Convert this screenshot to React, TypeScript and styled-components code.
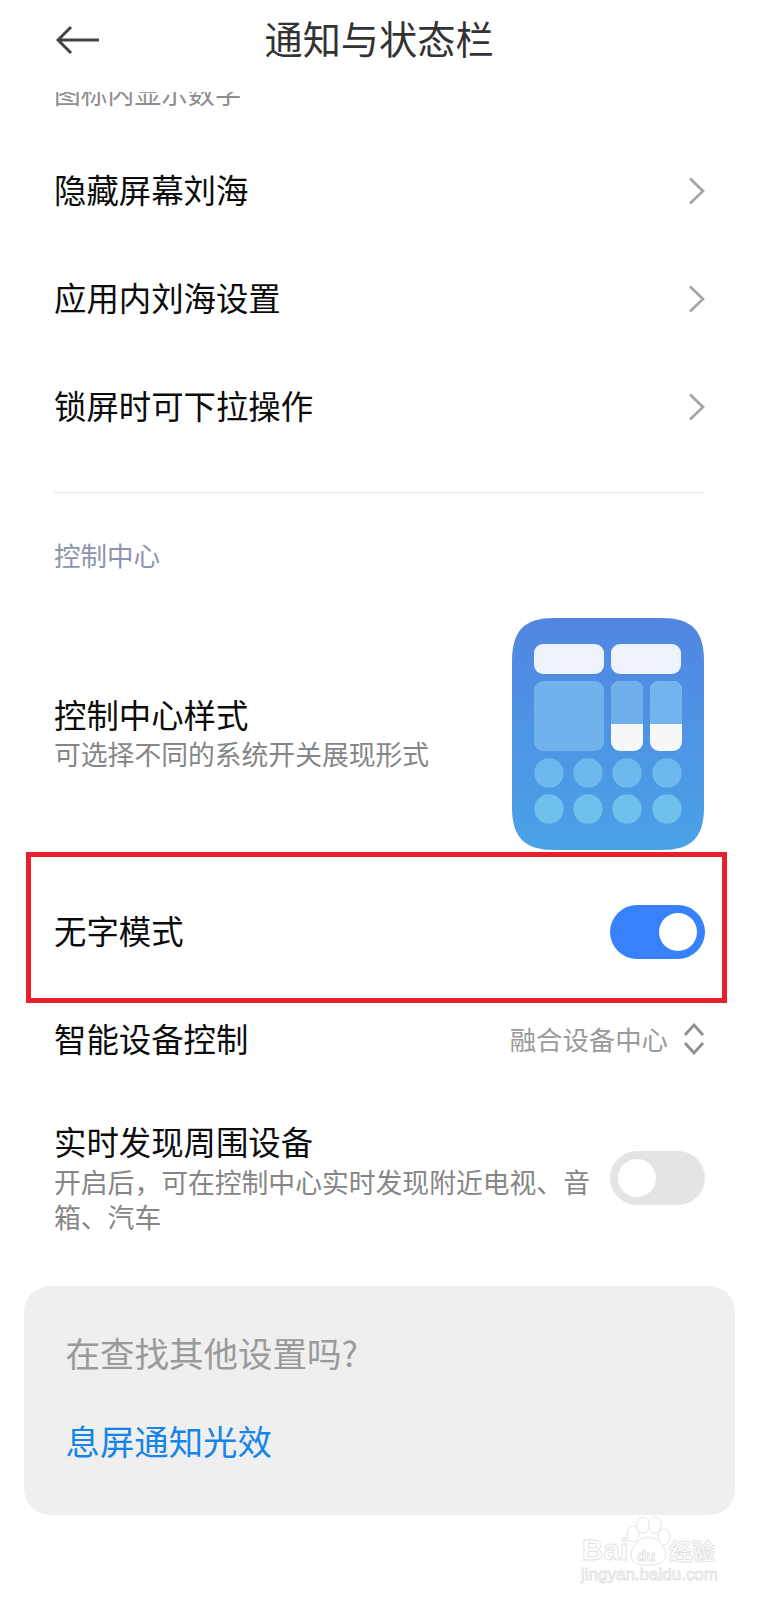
import React from "react";
import styled, { createGlobalStyle } from "styled-components";

const Global = createGlobalStyle`
  html, body { margin: 0; padding: 0; background: #fff; }
  body { font-family: "Noto Sans CJK SC", "Noto Sans", sans-serif; }
`;

const Page = styled.div`
  position: relative;
  width: 758px;
  height: 1600px;
  background: #fff;
  overflow: hidden;
  display: flex;
  flex-direction: column;
`;

const Header = styled.header`
  height: 92px;
  flex: none;
  padding-left: 56px;
  display: grid;
  grid-template-columns: 1fr auto 1fr;
  align-items: start;
  background: #fff;
  position: relative;
  z-index: 1;
`;

const BackIcon = styled.svg`
  width: 44px;
  height: 30px;
  margin-top: 25px;
  fill: none;
  stroke: #444;
  stroke-width: 3;
`;

const Title = styled.h1`
  margin: 10px 0 0 -56px;
  font-size: 38.2px;
  line-height: 56px;
  font-weight: 400;
  color: #333;
  white-space: nowrap;
`;

const Content = styled.main`
  flex: none;
  display: flex;
  flex-direction: column;
  padding: 0 53px 0 54px;
`;

const ClippedHint = styled.div`
  margin-top: -17px;
  margin-bottom: 27px;
  font-size: 26.8px;
  line-height: 35px;
  color: #8e8e8e;
`;

const LinkRow = styled.div`
  height: 108px;
  flex: none;
  display: flex;
  align-items: center;
  justify-content: space-between;
`;

const RowTitle = styled.div`
  margin-top: -4px;
  font-size: 32.4px;
  line-height: 44px;
  color: #0c0c0c;
  white-space: nowrap;
`;

const Chevron = styled.svg`
  width: 18px;
  height: 28px;
  fill: none;
  stroke: #a3a3a3;
  stroke-width: 2.6;
`;

const Divider = styled.hr`
  width: 100%;
  margin: 31px 0 0;
  border: 0;
  height: 1px;
  flex: none;
  background: #e4e4e4;
`;

const SectionLabel = styled.div`
  margin-top: 44px;
  font-size: 26.5px;
  line-height: 36px;
  color: #8b95ae;
`;

const StyleRow = styled.div`
  margin-top: 45px;
  display: flex;
  align-items: center;
  justify-content: space-between;
  flex: none;
`;

const TextBlock = styled.div`
  display: flex;
  flex-direction: column;
`;

const Sub = styled.div`
  font-size: 26.8px;
  line-height: 35px;
  color: #868686;
`;

const StyleText = styled(TextBlock)`
  margin-top: -2px;
`;

const Thumb = styled.svg`
  width: 194px;
  height: 232px;
  flex: none;
`;

const ToggleRow = styled.div`
  position: relative;
  margin-top: 28px;
  height: 108px;
  flex: none;
  display: flex;
  align-items: center;
  justify-content: space-between;
`;

const Highlight = styled.div`
  position: absolute;
  top: -26px;
  bottom: -17px;
  left: -28px;
  right: -22px;
  border: 5px solid #e8202c;
  pointer-events: none;
`;

const Toggle = styled.div<{ $on: boolean }>`
  width: 95px;
  height: 54px;
  flex: none;
  box-sizing: border-box;
  padding: 8px;
  border-radius: 27px;
  display: flex;
  justify-content: ${(p) => (p.$on ? "flex-end" : "flex-start")};
  background: ${(p) => (p.$on ? "#3782fb" : "#e4e4e4")};
`;

const Knob = styled.div`
  width: 38px;
  height: 38px;
  border-radius: 50%;
  background: #fff;
`;

const SelectRow = styled.div`
  height: 106px;
  box-sizing: border-box;
  padding-top: 2px;
  flex: none;
  display: flex;
  align-items: center;
  justify-content: space-between;
`;

const SelectValue = styled.div`
  display: flex;
  align-items: center;
  gap: 15px;
  margin-top: -3px;
  font-size: 26.4px;
  color: #9a9a9a;
`;

const UpDown = styled.svg`
  width: 22px;
  height: 32px;
  margin-top: 1px;
  fill: none;
  stroke: #8f8f8f;
  stroke-width: 2.8;
`;

const DiscoverRow = styled.div`
  margin-top: 29px;
  display: flex;
  align-items: center;
  justify-content: space-between;
  flex: none;
`;

const DiscoverText = styled(TextBlock)`
  width: 540px;
`;

const DiscoverTitle = styled(RowTitle)`
  margin-top: -2px;
  margin-bottom: 1px;
`;

const Suggest = styled.section`
  margin: 52px 23px 0 23.5px;
  height: 229px;
  flex: none;
  box-sizing: border-box;
  padding: 38px 42px 0;
  border-radius: 26px;
  background: #efefef;
`;

const SuggestTitle = styled.div`
  font-size: 34.5px;
  line-height: 56px;
  color: #9a9a9a;
`;

const SuggestLink = styled.div`
  margin-top: 32px;
  font-size: 34.4px;
  line-height: 56px;
  color: #1585e7;
`;

const Watermark = styled.svg`
  position: absolute;
  left: 576px;
  top: 1510px;
  width: 145px;
  height: 78px;
  fill: #fff;
  stroke: #e2e2e2;
  stroke-width: 0.9;
`;

const WatermarkLatin = styled.text`
  font-family: "Liberation Sans", sans-serif;
`;

const WatermarkCjk = styled.text`
  font-family: "Noto Sans CJK SC", sans-serif;
`;

const NavChevron = () => (
  <Chevron viewBox="0 0 18 28">
    <path d="M3 1.5 L16 14 L3 26.5" />
  </Chevron>
);

const CIRCLE_X = [37, 76, 115, 155];

const ControlThumb = () => (
  <Thumb viewBox="-1 0 194 232">
    <defs>
      <linearGradient id="thumbBg" x1="0" y1="0" x2="0" y2="1">
        <stop offset="0" stopColor="#5186e2" />
        <stop offset="1" stopColor="#4aa2e6" />
      </linearGradient>
    </defs>
    <path
      d="M42 0 H150 C180 0 192 13 192 43 V189 C192 219 180 232 150 232 H42 C12 232 0 219 0 189 V43 C0 13 12 0 42 0 Z"
      fill="url(#thumbBg)"
    />
    <rect x="22" y="26" width="70" height="30" rx="9" fill="#eef3fb" />
    <rect x="99" y="26" width="70" height="30" rx="9" fill="#eef3fb" />
    <rect x="22" y="63" width="70" height="70" rx="9" fill="#70b2ec" />
    <rect x="99" y="63" width="32" height="70" rx="9" fill="#f6f7f9" />
    <path d="M99 106 V72 a9 9 0 0 1 9 -9 h14 a9 9 0 0 1 9 9 V106 Z" fill="#6fb0ec" />
    <rect x="138" y="63" width="32" height="70" rx="9" fill="#f6f7f9" />
    <path d="M138 106 V72 a9 9 0 0 1 9 -9 h14 a9 9 0 0 1 9 9 V106 Z" fill="#72b4ed" />
    {CIRCLE_X.map((cx) => (
      <circle key={`a${cx}`} cx={cx} cy={155} r="14.7" fill="#6db8ec" />
    ))}
    {CIRCLE_X.map((cx) => (
      <circle key={`b${cx}`} cx={cx} cy={191} r="14.7" fill="#70c0ee" />
    ))}
  </Thumb>
);

const BaiduMark = () => (
  <Watermark viewBox="0 0 145 78">
    <ellipse cx="57" cy="24" rx="6" ry="8" />
    <ellipse cx="67" cy="15" rx="6.5" ry="8" />
    <ellipse cx="79" cy="15" rx="6.5" ry="8" />
    <ellipse cx="88" cy="27" rx="6" ry="8" />
    <path d="M72 27 C82 27 90 37 90 45 C90 54 80 55 72 55 C63 55 55 54 55 45 C55 37 63 27 72 27 Z" />
    <WatermarkLatin x="6" y="50" fontSize="29" fontWeight="700" textLength="46">Bai</WatermarkLatin>
    <WatermarkLatin x="61" y="51" fontSize="15" fontWeight="700">du</WatermarkLatin>
    <WatermarkCjk x="93" y="50" fontSize="23" fontWeight="700">经验</WatermarkCjk>
    <WatermarkLatin x="5" y="70" fontSize="17" textLength="137">jingyan.baidu.com</WatermarkLatin>
  </Watermark>
);

export default function App() {
  return (
    <Page>
      <Global />
      <Header>
        <BackIcon viewBox="0 0 44 30">
          <path d="M15 2 L2 15 L15 28 M2 15 H43" />
        </BackIcon>
        <Title>通知与状态栏</Title>
      </Header>
      <Content>
        <ClippedHint>图标内显示数字</ClippedHint>
        <LinkRow>
          <RowTitle>隐藏屏幕刘海</RowTitle>
          <NavChevron />
        </LinkRow>
        <LinkRow>
          <RowTitle>应用内刘海设置</RowTitle>
          <NavChevron />
        </LinkRow>
        <LinkRow>
          <RowTitle>锁屏时可下拉操作</RowTitle>
          <NavChevron />
        </LinkRow>
        <Divider />
        <SectionLabel>控制中心</SectionLabel>
        <StyleRow>
          <StyleText>
            <RowTitle>控制中心样式</RowTitle>
            <Sub>可选择不同的系统开关展现形式</Sub>
          </StyleText>
          <ControlThumb />
        </StyleRow>
        <ToggleRow>
          <RowTitle>无字模式</RowTitle>
          <Toggle $on>
            <Knob />
          </Toggle>
          <Highlight />
        </ToggleRow>
        <SelectRow>
          <RowTitle>智能设备控制</RowTitle>
          <SelectValue>
            融合设备中心
            <UpDown viewBox="0 0 22 32">
              <path d="M2 12 L11 2 L20 12 M2 20 L11 30 L20 20" />
            </UpDown>
          </SelectValue>
        </SelectRow>
        <DiscoverRow>
          <DiscoverText>
            <DiscoverTitle>实时发现周围设备</DiscoverTitle>
            <Sub>开启后，可在控制中心实时发现附近电视、音箱、汽车</Sub>
          </DiscoverText>
          <Toggle $on={false}>
            <Knob />
          </Toggle>
        </DiscoverRow>
      </Content>
      <Suggest>
        <SuggestTitle>在查找其他设置吗?</SuggestTitle>
        <SuggestLink>息屏通知光效</SuggestLink>
      </Suggest>
      <BaiduMark />
    </Page>
  );
}
